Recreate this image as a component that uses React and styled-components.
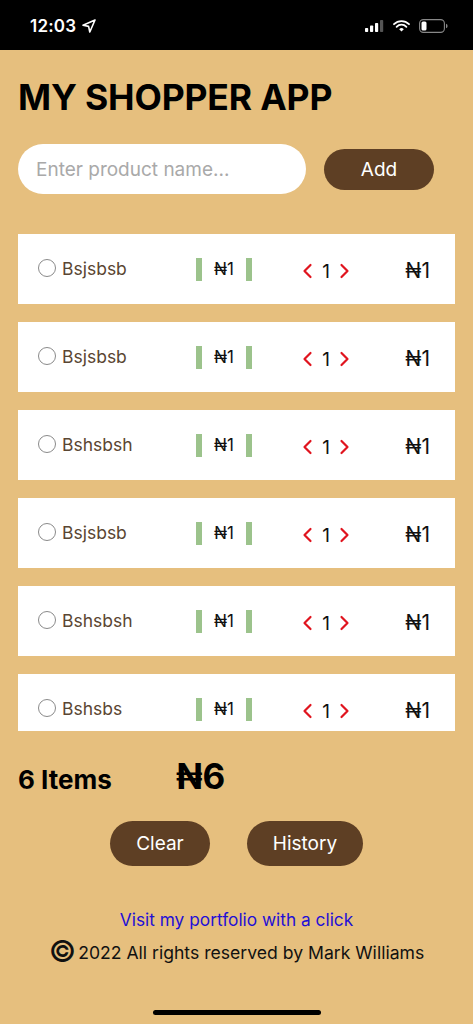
import React from "react";
import styled, { createGlobalStyle } from "styled-components";

const Global = createGlobalStyle`
  html, body { margin: 0; padding: 0; background: #e6bf7e; }
  body { font-family: Inter, "Noto Sans", "DejaVu Sans", sans-serif; }
  * { box-sizing: border-box; }
`;

const Page = styled.div`
  width: 473px;
  min-height: 1024px;
  background: #e6bf7e;
  display: flex;
  flex-direction: column;
`;

const StatusBar = styled.div`
  height: 50px;
  background: #000;
  display: flex;
  align-items: center;
  justify-content: space-between;
  padding: 2px 25px 0 30px;
  color: #fff;
`;

const Time = styled.div`
  display: flex;
  align-items: center;
  gap: 6px;
  font-size: 17px;
  font-weight: 600;
  letter-spacing: 0.2px;
`;

const StatusIcons = styled.div`
  display: flex;
  align-items: center;
  gap: 9px;
`;

const Main = styled.main`
  padding: 0 18px;
  display: flex;
  flex-direction: column;
`;

const Title = styled.h1`
  margin: 27px 0 0;
  font-size: 35.5px;
  font-weight: 700;
  line-height: 42px;
  color: #000;
  letter-spacing: -0.15px;
`;

const AddBar = styled.div`
  display: flex;
  align-items: center;
  margin-top: 25px;
`;

const Input = styled.input`
  width: 288px;
  height: 50px;
  border: none;
  border-radius: 25px;
  background: #fff;
  padding: 0 18px;
  font-family: inherit;
  font-size: 19px;
  color: #333;
  outline: none;
  &::placeholder { color: #a9a9a9; }
`;

const PillButton = styled.button`
  height: ${(p) => p.$h || 45}px;
  width: ${(p) => p.$w}px;
  border: none;
  border-radius: 23px;
  background: #5e3f24;
  color: #fff;
  font-family: inherit;
  font-size: 19px;
  padding: 0;
`;

const List = styled.div`
  margin-top: 40px;
  height: 497px;
  overflow: hidden;
  display: flex;
  flex-direction: column;
  gap: 18px;
`;

const Row = styled.div`
  flex: 0 0 70px;
  background: #fff;
  display: flex;
  align-items: center;
  padding: 0 25px 0 20px;
`;

const NameCell = styled.label`
  width: 158px;
  display: flex;
  align-items: center;
  gap: 6px;
  font-size: 17.5px;
  color: #5a4632;
  margin-top: -2px;
`;

const Radio = styled.span`
  width: 18px;
  height: 18px;
  border-radius: 50%;
  border: 1.5px solid #8a8a8a;
  flex: none;
`;

const PriceCell = styled.div`
  width: 56px;
  display: flex;
  align-items: center;
  justify-content: space-between;
  margin-right: 50px;
  font-size: 17px;
  color: #111;
`;

const Bar = styled.span`
  width: 6px;
  height: 23px;
  background: #9cc38c;
`;

const QtyCell = styled.div`
  width: 48px;
  display: flex;
  align-items: center;
  justify-content: space-between;
  font-size: 19px;
  color: #111;
  margin-top: 4px;
`;

const Total = styled.div`
  margin-left: auto;
  font-size: 21px;
  color: #111;
  margin-top: 2px;
`;

const Summary = styled.div`
  display: flex;
  align-items: baseline;
  margin-top: 24px;
`;

const Count = styled.div`
  width: 158px;
  font-size: 26px;
  font-weight: 700;
  color: #000;
`;

const GrandTotal = styled.div`
  font-size: 35px;
  font-weight: 700;
  color: #000;
`;

const Actions = styled.div`
  display: flex;
  justify-content: center;
  gap: 37px;
  margin-top: 24px;
`;

const Footer = styled.footer`
  display: flex;
  flex-direction: column;
  align-items: center;
  margin-top: 43px;
  gap: 12px;
`;

const Link = styled.a`
  color: #1f0fd6;
  text-decoration: none;
  font-size: 17.3px;
`;

const Copy = styled.div`
  display: flex;
  align-items: flex-start;
  font-size: 17.6px;
  color: #111;
`;

const CopyMark = styled.span`
  font-size: 30px;
  line-height: 18px;
  margin-right: 2px;
  font-weight: 500;
`;

const HomeIndicator = styled.div`
  margin: auto auto 9px;
  width: 168px;
  height: 5px;
  border-radius: 3px;
  background: #000;
`;

const Chevron = ({ dir }) => (
  <svg width="11" height="16" viewBox="0 0 11 16">
    <path
      d={dir === "left" ? "M8.5 2 L2.5 8 L8.5 14" : "M2.5 2 L8.5 8 L2.5 14"}
      fill="none"
      stroke="#e0141e"
      strokeWidth="2.2"
      strokeLinecap="round"
      strokeLinejoin="round"
    />
  </svg>
);

const items = ["Bsjsbsb", "Bsjsbsb", "Bshsbsh", "Bsjsbsb", "Bshsbsh", "Bshsbs"];

export default function App() {
  return (
    <>
      <Global />
      <Page>
        <StatusBar>
          <Time>
            12:03
            <svg width="14" height="14" viewBox="0 0 14 14">
              <path d="M13 1 L1 6.2 L6.6 7.4 L7.8 13 Z" fill="none" stroke="#fff" strokeWidth="1.6" strokeLinejoin="round" />
            </svg>
          </Time>
          <StatusIcons>
            <svg width="19" height="12" viewBox="0 0 19 12">
              <rect x="0" y="8" width="3.2" height="4" rx="0.8" fill="#fff" />
              <rect x="5" y="5.5" width="3.2" height="6.5" rx="0.8" fill="#fff" />
              <rect x="10" y="3" width="3.2" height="9" rx="0.8" fill="#fff" />
              <rect x="15" y="0" width="3.2" height="12" rx="0.8" fill="#555" />
            </svg>
            <svg width="17" height="12" viewBox="0 0 17 12">
              <path d="M1 4.2 A10.5 10.5 0 0 1 16 4.2" fill="none" stroke="#fff" strokeWidth="1.8" strokeLinecap="round" />
              <path d="M3.6 6.8 A6.8 6.8 0 0 1 13.4 6.8" fill="none" stroke="#fff" strokeWidth="1.8" strokeLinecap="round" />
              <path d="M6.2 9.3 L8.5 11.6 L10.8 9.3 A3.2 3.2 0 0 0 6.2 9.3 Z" fill="#fff" />
            </svg>
            <svg width="29" height="14" viewBox="0 0 29 14">
              <rect x="0.6" y="0.6" width="24.8" height="12.8" rx="3.8" fill="none" stroke="#888" strokeWidth="1.1" />
              <rect x="2.5" y="2.5" width="5" height="9" rx="1.5" fill="#fff" />
              <path d="M27 4.8 Q28.6 5.2 28.6 7 Q28.6 8.8 27 9.2 Z" fill="#888" />
            </svg>
          </StatusIcons>
        </StatusBar>
        <Main>
          <Title>MY SHOPPER APP</Title>
          <AddBar>
            <Input placeholder="Enter product name..." />
            <PillButton $w={110} $h={41} style={{ marginLeft: 18 }}>Add</PillButton>
          </AddBar>
          <List>
            {items.map((name, i) => (
              <Row key={i}>
                <NameCell>
                  <Radio />
                  {name}
                </NameCell>
                <PriceCell>
                  <Bar />
                  ₦1
                  <Bar />
                </PriceCell>
                <QtyCell>
                  <Chevron dir="left" />
                  1
                  <Chevron dir="right" />
                </QtyCell>
                <Total>₦1</Total>
              </Row>
            ))}
          </List>
          <Summary>
            <Count>6 Items</Count>
            <GrandTotal>₦6</GrandTotal>
          </Summary>
          <Actions>
            <PillButton $w={100}>Clear</PillButton>
            <PillButton $w={116}>History</PillButton>
          </Actions>
          <Footer>
            <Link href="#">Visit my portfolio with a click</Link>
            <Copy>
              <CopyMark>©</CopyMark>2022 All rights reserved by Mark Williams
            </Copy>
          </Footer>
        </Main>
        <HomeIndicator />
      </Page>
    </>
  );
}
